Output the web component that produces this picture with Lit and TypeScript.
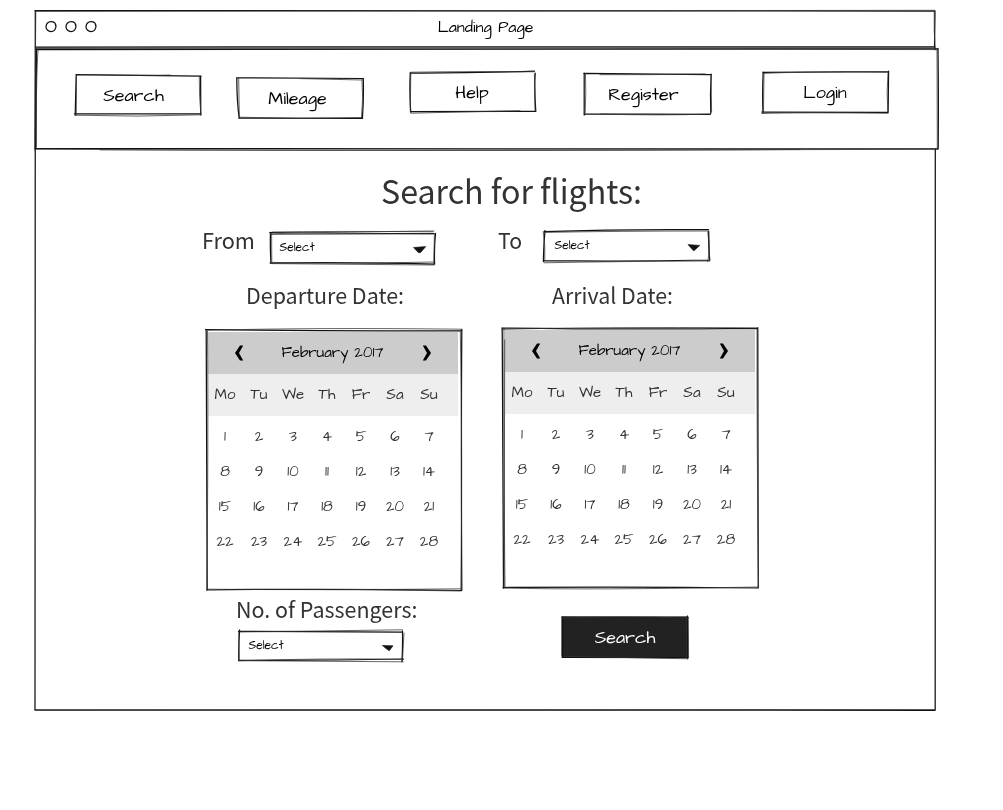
import { LitElement, html, svg, css, nothing } from "lit";
import { customElement, property } from "lit/decorators.js";

/* One run of text whose bottom edge is the baseline: fitted to an advance width, or centred on it. */
@customElement("fit-text")
class FitText extends LitElement {
  @property() text = "";
  @property({ type: Number }) width = 0;
  @property({ type: Number }) size = 16;
  @property({ type: Number }) rise = 0;
  @property({ type: Boolean }) mid = false;

  /* All text is neutral grey; the filter drops coloured fringes on thin glyphs. */
  static styles = css`
    :host { display: block; flex: none; filter: grayscale(1); }
    svg { display: block; overflow: visible; }
    text { fill: currentColor; }
  `;

  render() {
    const h = this.rise || this.size;
    return html`<svg width=${this.width} height=${h}>
      ${this.mid
        ? svg`<text x=${this.width / 2} y=${h} font-size=${this.size} text-anchor="middle">${this.text}</text>`
        : svg`<text x="0" y=${h} font-size=${this.size} textLength=${this.width} lengthAdjust="spacingAndGlyphs">${this.text}</text>`}
    </svg>`;
  }
}

/* Hand-drawn outline; strokes share one sheet coordinate system, x/y is the sheet origin of the box. */
@customElement("ink-frame")
class InkFrame extends LitElement {
  @property({ type: Number }) x = 0;
  @property({ type: Number }) y = 0;
  @property({ type: Number }) w = 0;
  @property({ type: Number }) h = 0;
  @property() fill = "none";
  @property() area = "";
  @property() strokes = "";
  @property() fine = "";
  @property() solid = "";

  static styles = css`
    :host { display: block; }
    svg { display: block; overflow: visible; }
    .main { fill: none; stroke: #111; stroke-width: 1.25; stroke-linecap: round; }
    .fine { fill: none; stroke: #333; stroke-width: 0.75; stroke-linecap: round; }
    .solid { fill: #111; stroke: #111; stroke-width: 0.6; }
  `;

  render() {
    return html`<svg width=${this.w} height=${this.h}
      viewBox="${this.x} ${this.y} ${this.w} ${this.h}">
      ${this.area ? svg`<path d=${this.area} fill=${this.fill}></path>` : nothing}
      <path class="main" d=${this.strokes}></path>
      <path class="fine" d=${this.fine}></path>
      <path class="solid" d=${this.solid}></path>
    </svg>`;
  }
}

const NAV = [
  { id: "search", text: "Search", width: 61, x: 75, y: 75,
    main: "M76 74.6L201 76.2M76.2 74.6L75.2 115M200.6 76L200.8 115M74.5 113.8L201 113.8",
    fine: "M76.5 75L76.3 115M199.3 76.3Q199 95 200.8 114M75 115.2Q138 117.2 201 114.8M80 74.5Q140 75.8 170 75" },
  { id: "mileage", text: "Mileage", width: 59, x: 237, y: 78,
    main: "M236.5 77.8L363 78.5M236.8 78Q236.8 100 239.2 118.3M363.3 78.5Q363.8 100 362.4 118.4M239 118L362.5 118.4",
    fine: "M238.7 78.5L239.3 117M362 79Q363.5 98 361.5 118M239 117.2Q300 119.5 362 117.5M300 78.6L362 80" },
  { id: "help", text: "Help", width: 34, x: 410, y: 72,
    main: "M410 73Q470 73.2 534.5 71.2M410.3 72.6Q409.3 92 410.7 112.2M535.2 73.2Q534.2 90 535.8 111.4M410.5 111.6L535.8 111.2",
    fine: "M410.8 73L410.3 112M410.8 113.2Q460 112 520 110.7M411 72.2Q480 71.2 534 71.8M534.4 74L535 111" },
  { id: "register", text: "Register", width: 71, x: 584, y: 74,
    main: "M583.8 73.4L711 74.6M584.2 73.3L584.2 115M711.2 74.2Q710 94 710.8 113.3M584 113.8L710.3 114.3",
    fine: "M585.5 73.5Q586.2 92 585.2 113.5M600 74.7Q650 75 705 73.9M600 114Q660 115.8 710 114M711 75L711.6 112" },
  { id: "login", text: "Login", width: 44, x: 762, y: 72,
    main: "M762.8 72.4L888.5 71.5M763.2 72Q762.2 92 763 113M888.6 71.2L888.1 112.5M762 112L888 112.4",
    fine: "M763.4 73.4Q800 71.5 888 72.4M888 73Q886.3 91 887.8 112M761.8 113.5Q800 112.3 888 113.3M764 73L763.5 111" },
];

const DAYS = ["Mo", "Tu", "We", "Th", "Fr", "Sa", "Su"];

@customElement("app-root")
class AppRoot extends LitElement {
  static styles = css`
    :host { display: block; box-sizing: border-box; width: 1003px; height: 810px; padding: 10px 0 0 35px; background: #fff; overflow: hidden; }
    .stack { display: grid; width: max-content; align-items: start; justify-items: start; flex: none; }
    .stack > * { grid-area: 1 / 1; }
    .ink { font-family: "Architects Daughter", Lato, sans-serif; font-weight: 400; color: #000; }
    .print { font-family: "Noto Sans CJK SC", sans-serif; color: #333; }
    .page { display: flex; flex-direction: column; width: 902px; height: 700px; }
    .titlebar { display: flex; height: 38px; flex: none; align-items: flex-start; }
    .title { margin: 7px 0 0 401.5px; }
    nav { display: flex; align-items: flex-start; }
    .navbox { height: 101px; flex: none; }
    .nav-items { display: flex; align-items: flex-start; }
    .search { margin: 27px 0 0 40px; } .search fit-text { margin: 10px 0 0 28px; }
    .mileage { margin: 30px 0 0 36px; } .mileage fit-text { margin: 10px 0 0 30.5px; }
    .help { margin: 24px 0 0 47px; } .help fit-text { margin: 9.5px 0 0 45px; }
    .register { margin: 26px 0 0 48px; } .register fit-text { margin: 10px 0 0 24px; }
    .login { margin: 24px 0 0 52px; } .login fit-text { margin: 9.5px 0 0 41px; }
    .heading { margin: 22px 0 0 346px; }
    .route { display: flex; align-items: flex-start; height: 34px; margin-top: 27px; }
    .from-label { margin: -4px 0 0 167px; }
    .from-box { margin: 1px 0 0 15px; }
    .to-label { margin: -4px 0 0 63px; }
    .to-box { margin-left: 21px; }
    .choice { margin: 8px 0 0 9px; }
    .to-box .choice { margin: 7px 0 0 11px; }
    .dates { display: flex; margin-top: 17px; height: 22px; }
    .dep { margin-left: 211px; } .arr { margin-left: 148px; }
    .calendars { display: flex; align-items: flex-start; margin-top: 24px; height: 262px; }
    .cal-dep { margin: 2px 0 0 171px; } .cal-arr { margin-left: 41px; }
    .sheet { width: 250px; margin: 2px 0 0 2px; }
    .month { display: flex; align-items: flex-start; height: 42px; background: #ccc; color: #000; }
    .month svg { flex: none; display: block; margin-top: 13px; }
    .prev { margin-left: 26px; } .next { margin-left: 38px; }
    .month fit-text { margin: 10px 0 0 37px; }
    .week { display: grid; grid-template-columns: repeat(7, 34px); justify-items: center; align-items: start; color: #333; }
    .names { height: 42px; padding-top: 11px; box-sizing: border-box; background: #eee; }
    .numbers { height: 35px; }
    .names + .numbers { padding-top: 12px; }
    .foot { display: flex; align-items: flex-start; margin-top: 5.5px; }
    .guests { margin-left: 201px; }
    .guests .stack { margin: 13px 0 0 2px; }
    .guests .choice { margin: 7.5px 0 0 10px; }
    .go { margin: 21px 0 0 144.5px; color: #fff; }
    .go fit-text { margin: 10px 0 0 31.5px; }
  `;

  calendar(cls: string, x: number, y: number, main: string, fine: string) {
    return html`<div class="stack ink ${cls}">
      <div class="sheet">
        <div class="month">
          <svg class="prev" width="10" height="16" viewBox="0 0 10 16"><path d="M6 .5H9.2L5 8L9.2 15.5H6L1 8Z"></path></svg>
          <fit-text mid text="February 2017" width="103" size="15" rise="15"></fit-text>
          <svg class="next" width="10" height="16" viewBox="0 0 10 16"><path d="M.8 .5H4L9 8L4 15.5H.8L5 8Z"></path></svg>
        </div>
        <div class="week names">${DAYS.map((d) => html`<fit-text mid text=${d} width="34" size="15" rise="14"></fit-text>`)}</div>
        ${[0, 1, 2, 3].map((r) => html`<div class="week numbers">${DAYS.map(
          (_, i) => html`<fit-text mid text=${String(r * 7 + i + 1)} width="34" size="15" rise="13"></fit-text>`)}</div>`)}
      </div>
      <ink-frame x=${x} y=${y} w="256" h="260" strokes=${main} fine=${fine}></ink-frame>
    </div>`;
  }

  render() {
    return html`<div class="stack">
      <ink-frame x="35" y="10" w="900" h="700"
        strokes="M35 10.5L935 11M35.3 10.5L35 710M935 11L934.5 48M935.3 149L935.2 710M35 710L935 710.3M35 47L935 46.8
          M56 26.5C56 23 53.7 21.5 51 21.5S46 23.7 46 26.7S48.5 31.6 51 31.6S55.5 30 56 26.5L55.2 23.8
          M76 26.5C76 23 73.7 21.5 71 21.5S66 23.7 66 26.7S68.5 31.6 71 31.6S75.5 30 76 26.5L75.2 23.8
          M96 26.5C96 23 93.7 21.5 91 21.5S86 23.7 86 26.7S88.5 31.6 91 31.6S95.5 30 96 26.5L95.2 23.8"
        fine="M35 11.4L935 10.3M35.8 12L34.6 150M934.2 12Q933.8 30 935.2 50M35 709.7L935 709.5M36 48L935 47.8"></ink-frame>
      <div class="page">
        <div class="titlebar"><fit-text mid class="title ink" text="Landing Page" width="97" size="16" rise="15"></fit-text></div>
        <nav class="stack">
          <ink-frame class="navbox" x="35" y="48" w="903" h="101"
            strokes="M36 49.6Q480 50.6 938 48.6M36.5 49L35.8 149M938 48.3Q938.6 95 938.2 148.5M35.5 148.6Q400 147.6 938 148.9"
            fine="M36 48.5L938 49.6M38 50Q36 80 36.3 147M937 50L937.3 149M36 149.2Q400 151.2 938 149.2M100 149.9Q500 151.2 800 149.5"></ink-frame>
          <div class="nav-items">${NAV.map((n) => html`<div class="stack ink ${n.id}">
            <ink-frame x=${n.x} y=${n.y} w="126" h="40" strokes=${n.main} fine=${n.fine}></ink-frame>
            <fit-text mid text=${n.text} width=${n.width} size="18" rise="16"></fit-text>
          </div>`)}</div>
        </nav>
        <fit-text class="heading print" text="Search for flights:" width="261" size="33"></fit-text>
        <div class="route">
          <fit-text class="from-label print" text="From" width="53" size="22"></fit-text>
          <div class="stack ink from-box">
            <ink-frame x="270" y="232" w="165" h="32"
              strokes="M269.8 232.5Q350 233.5 434 233.7M270.5 232.5Q270 248 271 263.3M435.5 233.3Q434 248 434.6 264M270.3 263.2Q340 261.8 434.5 264.2"
              fine="M270 233.8Q330 232 434 231M271 234.4L433 233.8M271.6 233L271.8 263M434.4 234L433.8 264M270 262.3Q330 264 434 262M272 263.6L434 265M272 232Q330 231 433 231.8"
              solid="M413.5 247.5L425.8 246.6L420.6 252.5L418.5 252.8Z"></ink-frame>
            <fit-text mid class="choice" text="Select" width="36" size="12" rise="11"></fit-text>
          </div>
          <fit-text class="to-label print" text="To" width="24" size="22"></fit-text>
          <div class="stack ink to-box">
            <ink-frame x="543" y="231" w="166" h="31"
              strokes="M544 231.6Q620 229 708.5 229.7M545 230.5Q543.6 245 543.4 261.5M708.4 231.5Q708.6 248 709.8 260.2M543.5 260.7Q630 261.8 709.8 260"
              fine="M544 232.4Q620 231 709 231M543.2 232Q545.5 245 544.8 261M544 262.8Q620 261.3 709.5 261M708 232Q710 250 707.8 261.5M709 232L709.4 261"
              solid="M688 244.6L699.8 245.4L694 250.8L693 250.3Z"></ink-frame>
            <fit-text mid class="choice" text="Select" width="36" size="12" rise="11"></fit-text>
          </div>
        </div>
        <div class="dates">
          <fit-text class="dep print" text="Departure Date:" width="158" size="22"></fit-text>
          <fit-text class="arr print" text="Arrival Date:" width="121" size="22"></fit-text>
        </div>
        <div class="calendars">
          ${this.calendar("cal-dep", 206, 330,
            "M205.5 329.5Q330 331.5 462 330.6M206.2 330Q206.2 450 207.2 590M461.8 329.5Q461 450 461.8 590M206.5 590Q330 588.3 461.8 590.5",
            "M206 330.4Q310 327.4 462 329.2M207.5 331Q208.5 440 206.8 589M460.3 331Q462.8 450 460.8 590M207 589.2Q330 590.3 461 588.8M350 589.4L461 591")}
          ${this.calendar("cal-arr", 503, 328,
            "M502 328Q620 329.6 757.6 328.4M502.2 328Q502.4 450 503.5 588M757.8 327.6L758.2 588M503 587.5Q630 586.3 758.2 588",
            "M502 329.4Q590 326.8 757 327.8M504 329Q503.4 440 505 587M757 329Q756.8 450 758.6 587M503 588Q590 590.2 758 587M504.7 340L504.2 587")}
        </div>
        <div class="foot">
          <div class="guests">
            <fit-text class="print" text="No. of Passengers:" width="181.5" size="22"></fit-text>
            <div class="stack ink">
              <ink-frame x="238" y="631" w="166" h="30"
                strokes="M238.5 631.4Q320 631.4 402.3 632M239.6 630Q238.5 645 238.8 660.5M402.5 631Q402.8 645 402 661.6M238.5 660.3Q320 660.7 403 659"
                fine="M239 632Q320 631 402.5 629.8M238.8 631L239.2 660M404 633Q403 650 402.5 661M238.5 660.8Q320 658 403.8 659.4M239 660.7L403 661.8"
                solid="M382.3 645.4L393 645.8L389.3 650.8L386.3 648.8Z"></ink-frame>
              <fit-text mid class="choice" text="Select" width="36" size="12" rise="11"></fit-text>
            </div>
          </div>
          <div class="stack ink go">
            <ink-frame x="562" y="617" w="126" h="41" fill="#222" area="M562 617L688 616.6L688.3 658L562.5 657.5Z"
              strokes="M562 616.8L688 617.3M562.8 617.5L562.5 657.5M687.4 616L687.6 658.5M562 657.3L688 657.5"
              fine="M562 618Q620 616 688 618M561.6 617L561.6 656M688.3 617L688.6 657.5M564 656.3L688 658.8M686.6 618L686.8 657"></ink-frame>
            <fit-text mid text="Search" width="62" size="18" rise="16"></fit-text>
          </div>
        </div>
      </div>
    </div>`;
  }
}
